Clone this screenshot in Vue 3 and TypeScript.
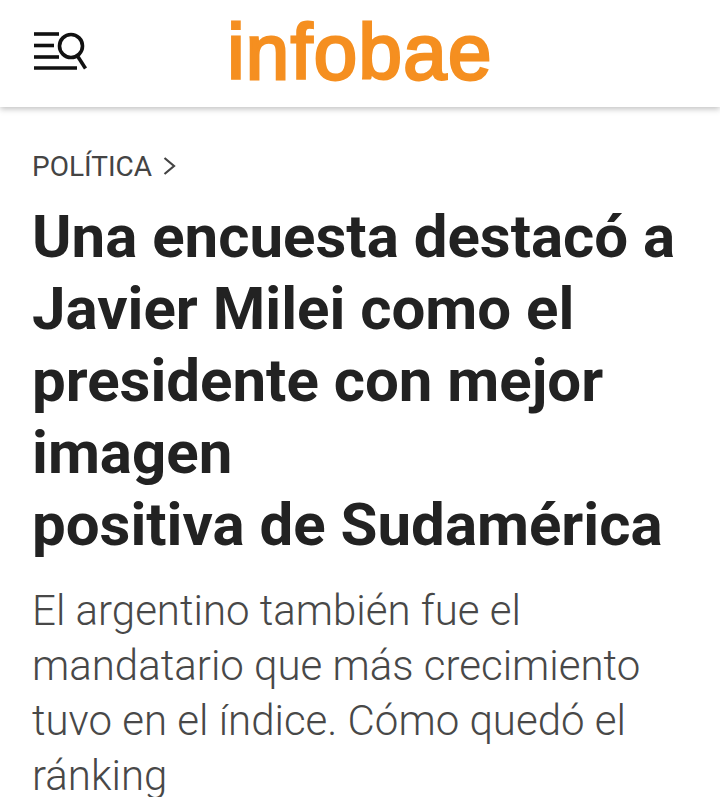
<template>
  <div class="page">
    <header class="topbar">
      <button class="menu-btn" aria-label="Menú">
        <svg width="54" height="40" viewBox="0 0 54 40" fill="none" stroke="#111" stroke-width="3.6">
          <line x1="1" y1="2" x2="26" y2="2"></line>
          <line x1="1" y1="13.5" x2="21" y2="13.5"></line>
          <line x1="1" y1="25" x2="26" y2="25"></line>
          <line x1="1" y1="36" x2="44" y2="36"></line>
          <circle cx="38" cy="14" r="11.5"></circle>
          <line x1="44.5" y1="24" x2="52.5" y2="36.5"></line>
        </svg>
      </button>
      <div class="logo">infobae</div>
    </header>
    <main class="article">
      <div class="kicker">
        <span>POLÍTICA</span>
        <svg width="13" height="20" viewBox="0 0 13 20" fill="none" stroke="#444" stroke-width="2.2">
          <polyline points="1.5,2 11,10 1.5,18"></polyline>
        </svg>
      </div>
      <h1 class="headline">Una encuesta destacó a Javier Milei como el presidente con mejor imagen<br>positiva de Sudamérica</h1>
      <p class="deck">El argentino también fue el mandatario que más crecimiento tuvo en el índice. Cómo quedó el ránking</p>
    </main>
  </div>
</template>

<script setup lang="ts">
</script>

<style>
html,
body {
  background: #fff;
  overflow: hidden;
}
</style>

<style scoped>
.page {
  width: 720px;
  height: 797px;
  overflow: hidden;
  font-family: Roboto, "Liberation Sans", sans-serif;
  background: #fff;
}

.topbar {
  box-sizing: border-box;
  height: 107px;
  padding-bottom: 2px;
  position: relative;
  display: flex;
  align-items: center;
  justify-content: center;
  box-shadow: 0 2px 6px rgba(0, 0, 0, 0.25);
}

.menu-btn {
  position: absolute;
  left: 33px;
  top: 32px;
  padding: 0;
  border: none;
  background: none;
  line-height: 0;
}

.logo {
  font-family: "Liberation Sans", Arial, sans-serif;
  font-size: 78px;
  line-height: 103px;
  color: #f58f20;
  letter-spacing: 1.4px;
  -webkit-text-stroke: 2.8px #f58f20;
}

.article {
  padding: 42px 32px 0;
}

.kicker {
  display: flex;
  align-items: center;
  gap: 11px;
  height: 34px;
  font-size: 28px;
  color: #444;
}

.headline {
  margin: 18px 0 0;
  font-size: 60px;
  line-height: 72px;
  font-weight: 700;
  color: #222;
}

.deck {
  margin: 22px 0 0;
  font-size: 42px;
  line-height: 55px;
  font-weight: 300;
  color: #484848;
}
</style>
